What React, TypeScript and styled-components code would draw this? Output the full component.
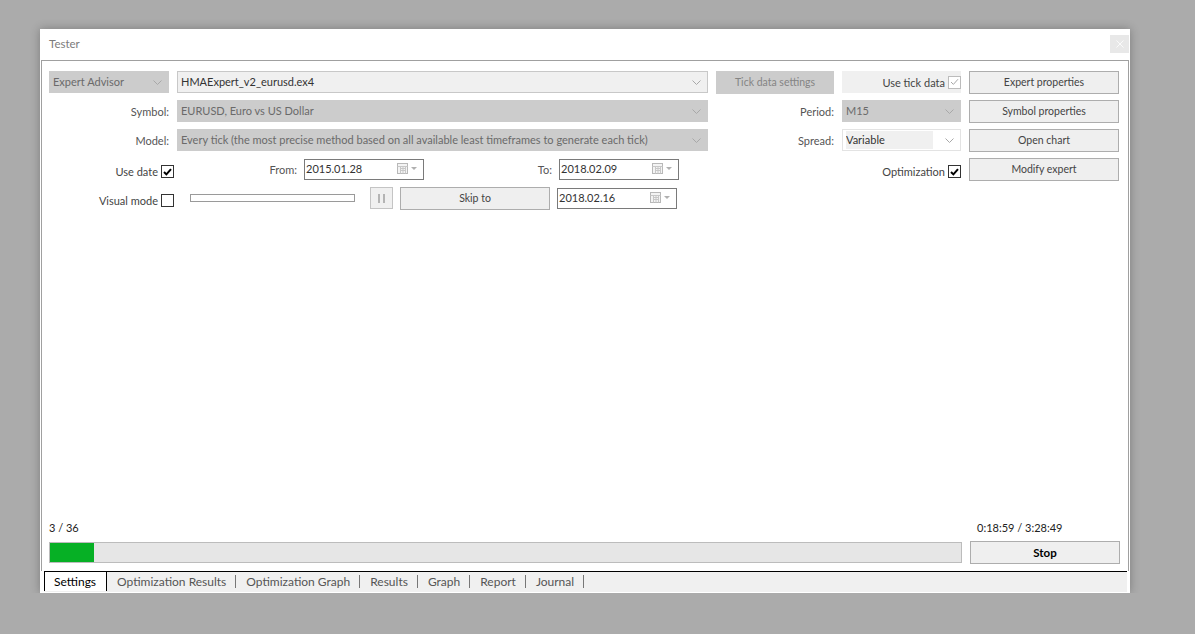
import React from 'react';
import styled, { createGlobalStyle } from 'styled-components';

const GlobalStyle = createGlobalStyle`
  html, body {
    margin: 0;
    padding: 0;
    background: #ababab;
  }
  body {
    font-family: Lato, 'Liberation Sans', Arial, sans-serif;
    font-size: 11px;
    color: #333;
  }
`;

const Window = styled.div`
  margin: 29px 0 0 40px;
  width: 1090px;
  height: 564px;
  background: #fff;
  display: flex;
  flex-direction: column;
  box-shadow: 0 0 9px rgba(0, 0, 0, 0.28);
`;

const TitleBar = styled.div`
  height: 31px;
  flex: none;
  display: flex;
  align-items: center;
  justify-content: space-between;
  padding: 0 1px 2px 9px;
  box-sizing: border-box;
  color: #7c7c7c;
  font-size: 11.5px;
`;

const CloseBox = styled.div`
  width: 19px;
  height: 18px;
  background: #e8e8e8;
  display: flex;
  align-items: center;
  justify-content: center;
`;

const Panel = styled.div`
  flex: 1;
  margin: 0 1px 0 1px;
  border: 1px solid #a0a0a0;
  border-bottom: none;
  display: flex;
  flex-direction: column;
  padding: 10px 8px 7px 7px;
`;

const Settings = styled.div`
  display: grid;
  grid-template-columns: 120px 531px 118px 119px 150px;
  grid-auto-rows: 22px;
  column-gap: 8px;
  row-gap: 7px;
  align-items: center;
`;

const Label = styled.div`
  text-align: right;
  color: #555;
  white-space: nowrap;
`;

const Combo = styled.div<{ $variant?: 'disabled' | 'field' | 'white' }>`
  height: 22px;
  box-sizing: border-box;
  display: flex;
  align-items: center;
  justify-content: space-between;
  padding: 0 6px 0 3px;
  white-space: nowrap;
  overflow: hidden;
  background: ${({ $variant }) =>
    $variant === 'field' ? '#f0f0f0' : $variant === 'white' ? '#fff' : '#cccccc'};
  border: 1px solid
    ${({ $variant }) =>
      $variant === 'field' ? '#c8c8c8' : $variant === 'white' ? '#e3e3e3' : '#cccccc'};
  color: ${({ $variant }) => ($variant === 'disabled' ? '#6a6a6a' : '#333')};
`;

const ComboText = styled.span<{ $boxed?: boolean }>`
  flex: 1;
  overflow: hidden;
  background: ${({ $boxed }) => ($boxed ? '#f0f0f0' : 'transparent')};
  margin-right: ${({ $boxed }) => ($boxed ? '12px' : '8px')};
  line-height: 18px;
`;

const Button = styled.button<{ $disabled?: boolean; $bold?: boolean }>`
  height: 23px;
  width: 100%;
  box-sizing: border-box;
  font-family: inherit;
  font-size: ${({ $bold }) => ($bold ? '11.5px' : '10.5px')};
  font-weight: ${({ $bold }) => ($bold ? 700 : 400)};
  background: ${({ $disabled }) => ($disabled ? '#cccccc' : '#efefef')};
  border: 1px solid ${({ $disabled }) => ($disabled ? '#cccccc' : '#adadad')};
  color: ${({ $disabled, $bold }) => ($disabled ? '#848484' : $bold ? '#000' : '#444')};
  padding: 0;
  cursor: default;
`;

const CheckField = styled.div<{ $shaded?: boolean; $overhang?: boolean }>`
  height: 22px;
  display: flex;
  align-items: center;
  justify-content: flex-end;
  gap: 3px;
  color: #444;
  white-space: nowrap;
  background: ${({ $shaded }) => ($shaded ? '#f0f0f0' : 'transparent')};
  margin-right: ${({ $overhang }) => ($overhang ? '-5px' : '0')};
  padding-top: ${({ $shaded }) => ($shaded ? '0' : '5px')};
  box-sizing: border-box;
`;

const Box = styled.div<{ $disabled?: boolean }>`
  width: 13px;
  height: 13px;
  box-sizing: border-box;
  border: 1px solid ${({ $disabled }) => ($disabled ? '#bcbcbc' : '#333')};
  background: #fff;
  display: flex;
  align-items: center;
  justify-content: center;
`;

const InlineRow = styled.div`
  display: flex;
  align-items: center;
  height: 22px;
`;

const FieldLabel = styled.div<{ $w: number }>`
  width: ${({ $w }) => $w}px;
  text-align: right;
  color: #555;
  margin-right: 7px;
`;

const DateField = styled.div`
  width: 120px;
  height: 21px;
  box-sizing: border-box;
  border: 1px solid #7a7a7a;
  background: #fff;
  display: flex;
  align-items: center;
  justify-content: space-between;
  padding: 0 4px 2px 1px;
  color: #333;
`;

const Slider = styled.div`
  width: 165px;
  height: 8px;
  box-sizing: border-box;
  border: 1px solid #9a9a9a;
  background: #fff;
  margin-left: 13px;
`;

const PauseButton = styled.div`
  width: 23px;
  height: 22px;
  box-sizing: border-box;
  border: 1px solid #c4c4c4;
  background: #f0f0f0;
  margin-left: 15px;
  display: flex;
  align-items: center;
  justify-content: center;
  gap: 3px;
  &::before,
  &::after {
    content: '';
    width: 2px;
    height: 9px;
    background: #b4b4b4;
  }
`;

const SkipButton = styled(Button)`
  width: 150px;
  margin: 0 7px 0 7px;
`;

const Status = styled.div`
  margin-top: auto;
  display: grid;
  grid-template-columns: 1fr 150px;
  column-gap: 8px;
  row-gap: 7px;
  align-items: center;
  color: #222;
`;

const TimeText = styled.div`
  padding-left: 7px;
`;

const Progress = styled.div`
  height: 21px;
  box-sizing: border-box;
  border: 1px solid #bcbcbc;
  background: #e6e6e6;
`;

const ProgressFill = styled.div<{ $pct: number }>`
  height: 100%;
  width: ${({ $pct }) => $pct}%;
  background: #06b025;
`;

const TabStrip = styled.div`
  flex: none;
  height: 20px;
  margin: 0 3px 1px 4px;
  border-top: 1px solid #000;
  background: #f0f0f0;
  display: flex;
  align-items: stretch;
`;

const Tab = styled.div<{ $active?: boolean }>`
  position: relative;
  display: flex;
  align-items: center;
  padding: ${({ $active }) => ($active ? '0 10px 1px 9px' : '0 10px 1px')};
  color: ${({ $active }) => ($active ? '#000' : '#555')};
  background: ${({ $active }) => ($active ? '#fff' : 'transparent')};
  border-left: ${({ $active }) => ($active ? '1px solid #000' : 'none')};
  border-right: ${({ $active }) => ($active ? '1px solid #000' : 'none')};
  margin-bottom: ${({ $active }) => ($active ? '1px' : '0')};
  font-size: 12px;
  ${({ $active }) =>
    !$active &&
    `&::after {
      content: '';
      position: absolute;
      right: 0;
      top: 3px;
      height: 13px;
      width: 1px;
      background: #777;
    }`}
`;

const Chevron = () => (
  <svg width="9" height="5" viewBox="0 0 9 5">
    <path d="M0.5 0.5 L4.5 4.5 L8.5 0.5" fill="none" stroke="#a8a8a8" strokeWidth="1" />
  </svg>
);

const CheckMark = ({ color = '#000' }: { color?: string }) => (
  <svg width="9" height="8" viewBox="0 0 9 8">
    <path
      d="M1 4 L3.4 6.4 L8 1.2"
      fill="none"
      stroke={color}
      strokeWidth={color === '#000' ? 2 : 1}
    />
  </svg>
);

const Calendar = () => (
  <svg width="22" height="11" viewBox="0 0 22 11">
    <rect x="0.5" y="0.5" width="10" height="10" fill="#f4f4f4" stroke="#b8b8b8" />
    <path
      d="M0.5 3.5 H10.5 M3 5.5 H9 M3 7.5 H9 M3.5 3.5 V10.5 M6 3.5 V10.5 M8.5 3.5 V10.5"
      stroke="#c8c8c8"
      strokeWidth="1"
    />
    <path d="M14 4 L20 4 L17 7 Z" fill="#b0b0b0" />
  </svg>
);

const CloseIcon = () => (
  <svg width="8" height="8" viewBox="0 0 8 8">
    <path d="M0.5 0.5 L7.5 7.5 M7.5 0.5 L0.5 7.5" stroke="#fafafa" strokeWidth="1" />
  </svg>
);

const tabs = [
  'Optimization Results',
  'Optimization Graph',
  'Results',
  'Graph',
  'Report',
  'Journal',
];

const done = 4.8;

const App: React.FC = () => (
  <>
    <GlobalStyle />
    <Window>
      <TitleBar>
        <span>Tester</span>
        <CloseBox>
          <CloseIcon />
        </CloseBox>
      </TitleBar>
      <Panel>
        <Settings>
          <Combo $variant="disabled">
            <ComboText>Expert Advisor</ComboText>
            <Chevron />
          </Combo>
          <Combo $variant="field">
            <ComboText>HMAExpert_v2_eurusd.ex4</ComboText>
            <Chevron />
          </Combo>
          <Button $disabled>Tick data settings</Button>
          <CheckField $shaded>
            Use tick data
            <Box $disabled>
              <CheckMark color="#a8a8a8" />
            </Box>
          </CheckField>
          <Button>Expert properties</Button>

          <Label>Symbol:</Label>
          <Combo $variant="disabled">
            <ComboText>EURUSD, Euro vs US Dollar</ComboText>
            <Chevron />
          </Combo>
          <Label>Period:</Label>
          <Combo $variant="disabled">
            <ComboText>M15</ComboText>
            <Chevron />
          </Combo>
          <Button>Symbol properties</Button>

          <Label>Model:</Label>
          <Combo $variant="disabled">
            <ComboText>
              Every tick (the most precise method based on all available least timeframes to
              generate each tick)
            </ComboText>
            <Chevron />
          </Combo>
          <Label>Spread:</Label>
          <Combo $variant="white">
            <ComboText $boxed>Variable</ComboText>
            <Chevron />
          </Combo>
          <Button>Open chart</Button>

          <CheckField $overhang>
            Use date
            <Box>
              <CheckMark />
            </Box>
          </CheckField>
          <InlineRow>
            <FieldLabel $w={120}>From:</FieldLabel>
            <DateField>
              2015.01.28
              <Calendar />
            </DateField>
            <FieldLabel $w={128}>To:</FieldLabel>
            <DateField>
              2018.02.09
              <Calendar />
            </DateField>
          </InlineRow>
          <div />
          <CheckField>
            Optimization
            <Box>
              <CheckMark />
            </Box>
          </CheckField>
          <Button>Modify expert</Button>

          <CheckField $overhang>
            Visual mode
            <Box />
          </CheckField>
          <InlineRow>
            <Slider />
            <PauseButton />
            <SkipButton>Skip to</SkipButton>
            <DateField>
              2018.02.16
              <Calendar />
            </DateField>
          </InlineRow>
        </Settings>

        <Status>
          <div>3 / 36</div>
          <TimeText>0:18:59 / 3:28:49</TimeText>
          <Progress>
            <ProgressFill $pct={done} />
          </Progress>
          <Button $bold>Stop</Button>
        </Status>
      </Panel>
      <TabStrip>
        <Tab $active>Settings</Tab>
        {tabs.map((t) => (
          <Tab key={t}>{t}</Tab>
        ))}
      </TabStrip>
    </Window>
  </>
);

export default App;
